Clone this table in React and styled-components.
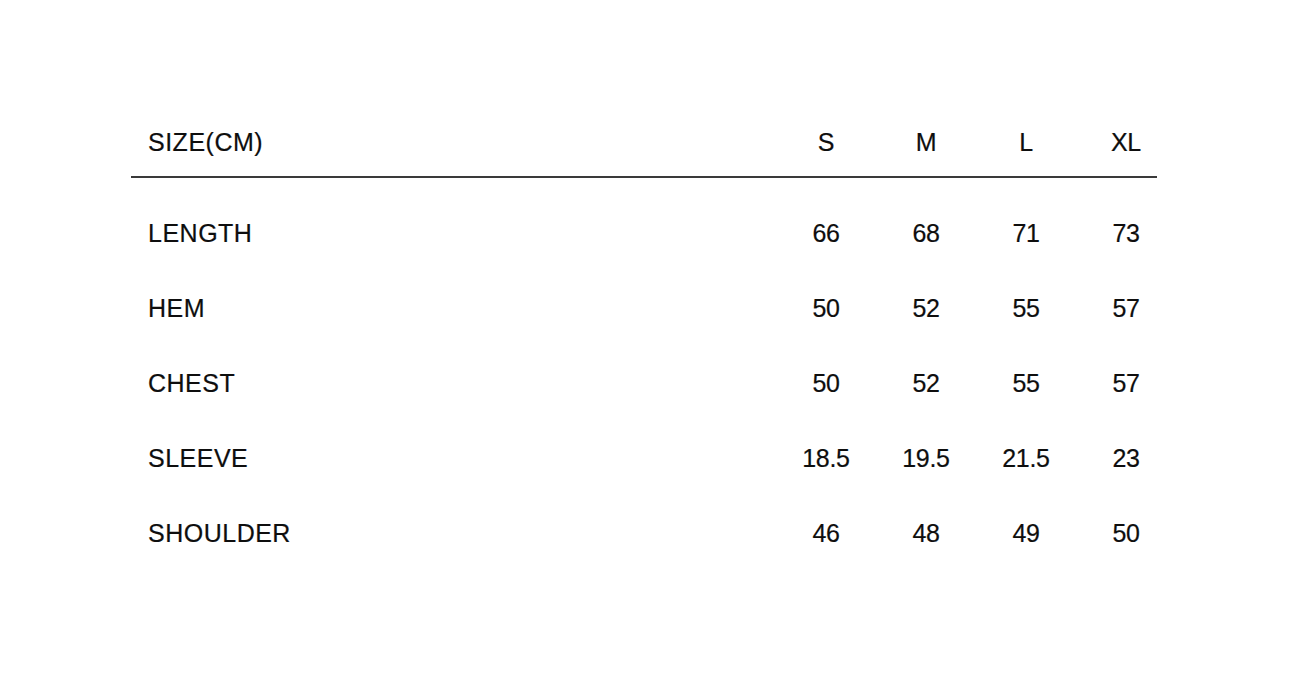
import styled, { createGlobalStyle } from "styled-components";

const GlobalStyle = createGlobalStyle`
  body {
    margin: 0;
    background: #fff;
    font-family: "Liberation Sans", Arial, sans-serif;
    color: #0e0e0e;
  }
`;

const sizes = ["S", "M", "L", "XL"];

const rows = [
  { name: "LENGTH", values: ["66", "68", "71", "73"] },
  { name: "HEM", values: ["50", "52", "55", "57"] },
  { name: "CHEST", values: ["50", "52", "55", "57"] },
  { name: "SLEEVE", values: ["18.5", "19.5", "21.5", "23"] },
  { name: "SHOULDER", values: ["46", "48", "49", "50"] },
];

export default function App() {
  return (
    <>
      <GlobalStyle />
      <Page>
        <Chart>
          <HeadRow>
            <Label>SIZE(CM)</Label>
            {sizes.map((s) => (
              <Cell key={s}>{s}</Cell>
            ))}
          </HeadRow>
          <Divider />
          <Body>
            {rows.map((row) => (
              <Row key={row.name}>
                <Label>{row.name}</Label>
                {row.values.map((v, i) => (
                  <Cell key={i}>{v}</Cell>
                ))}
              </Row>
            ))}
          </Body>
        </Chart>
      </Page>
    </>
  );
}

const Page = styled.div`
  width: 1290px;
  height: 683px;
  padding: 112px 0 0 131px;
  box-sizing: border-box;
`;

const Chart = styled.div`
  width: 1045px;
`;

const Row = styled.div`
  display: grid;
  grid-template-columns: 1fr repeat(4, 100px);
  align-items: center;
  height: 75px;
  font-size: 25px;
  -webkit-text-stroke: 0.2px #0e0e0e;
`;

const HeadRow = styled(Row)`
  height: 60px;
  margin-bottom: 4px;
`;

const Divider = styled.div`
  width: 1026px;
  height: 1.5px;
  background: #3a3a3a;
`;

const Body = styled.div`
  padding-top: 18px;
`;

const Label = styled.div`
  padding-left: 17px;
  letter-spacing: 0.5px;
`;

const Cell = styled.div`
  text-align: center;
  letter-spacing: -0.3px;
`;
